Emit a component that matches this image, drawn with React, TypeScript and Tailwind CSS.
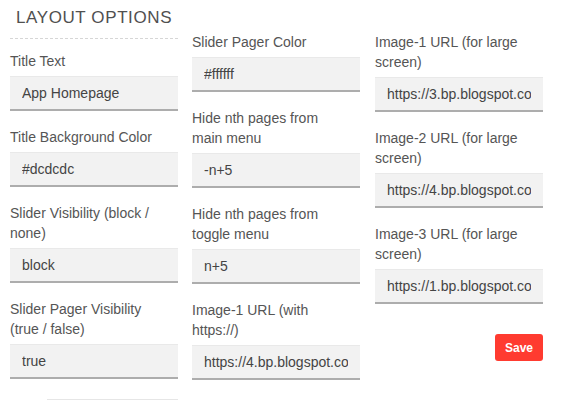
import React from "react";

type Field = { label: string; value: string };

const col1: Field[] = [
  { label: "Title Text", value: "App Homepage" },
  { label: "Title Background Color", value: "#dcdcdc" },
  { label: "Slider Visibility (block / none)", value: "block" },
  { label: "Slider Pager Visibility (true / false)", value: "true" },
];

const col2: Field[] = [
  { label: "Slider Pager Color", value: "#ffffff" },
  { label: "Hide nth pages from main menu", value: "-n+5" },
  { label: "Hide nth pages from toggle menu", value: "n+5" },
  { label: "Image-1 URL (with https://)", value: "https://4.bp.blogspot.com/-image1.jpg" },
];

const col3: Field[] = [
  { label: "Image-1 URL (for large screen)", value: "https://3.bp.blogspot.com/-large1.jpg" },
  { label: "Image-2 URL (for large screen)", value: "https://4.bp.blogspot.com/-large2.jpg" },
  { label: "Image-3 URL (for large screen)", value: "https://1.bp.blogspot.com/-large3.jpg" },
];

const OptionField = ({ label, value }: Field) => {
  return (
    <div className="mb-[16px]">
      <label className="block w-[150px] text-[14px] leading-[20px] text-[#555]">{label}</label>
      <input
        className="mt-[5px] block h-[35px] w-full border-t border-b-2 border-t-[#e9e9e9] border-b-[#adadad] bg-[#f2f2f2] px-[12px] text-[14px] text-[#444] outline-none"
        defaultValue={value}
        readOnly
      />
    </div>
  );
};

const App = () => {
  return (
    <div className="h-[401px] w-[562px] overflow-hidden bg-white font-['Liberation_Sans',Arial,sans-serif]">
      <div className="flex flex-row items-start pl-[10px]">
        {/* first column carries the section heading */}
        <div className="w-[168px] shrink-0">
          <div className="border-b border-dashed border-[#d6d6d6] pt-[8px] pb-[10px] pl-[6px]">
            <h2 className="text-[17px] leading-[20px] tracking-[0.6px] text-[#505050]">LAYOUT OPTIONS</h2>
          </div>
          <div className="mt-[12px]">
            {col1.map((f) => (
              <OptionField key={f.label} {...f} />
            ))}
          </div>
          <div className="mt-[20px] ml-[37px] border-t border-[#e6e6e6]" />
        </div>

        <div className="ml-[14px] w-[168px] shrink-0 pt-[32px]">
          {col2.map((f) => (
            <OptionField key={f.label} {...f} />
          ))}
        </div>

        <div className="ml-[15px] w-[168px] shrink-0 pt-[32px]">
          {col3.map((f) => (
            <OptionField key={f.label} {...f} />
          ))}
          <div className="flex justify-end pt-[14px]">
            <button className="h-[27px] rounded-[3px] bg-[#ff3b30] px-[10px] text-[12px] font-bold text-white">
              Save
            </button>
          </div>
        </div>
      </div>
    </div>
  );
};

export default App;
